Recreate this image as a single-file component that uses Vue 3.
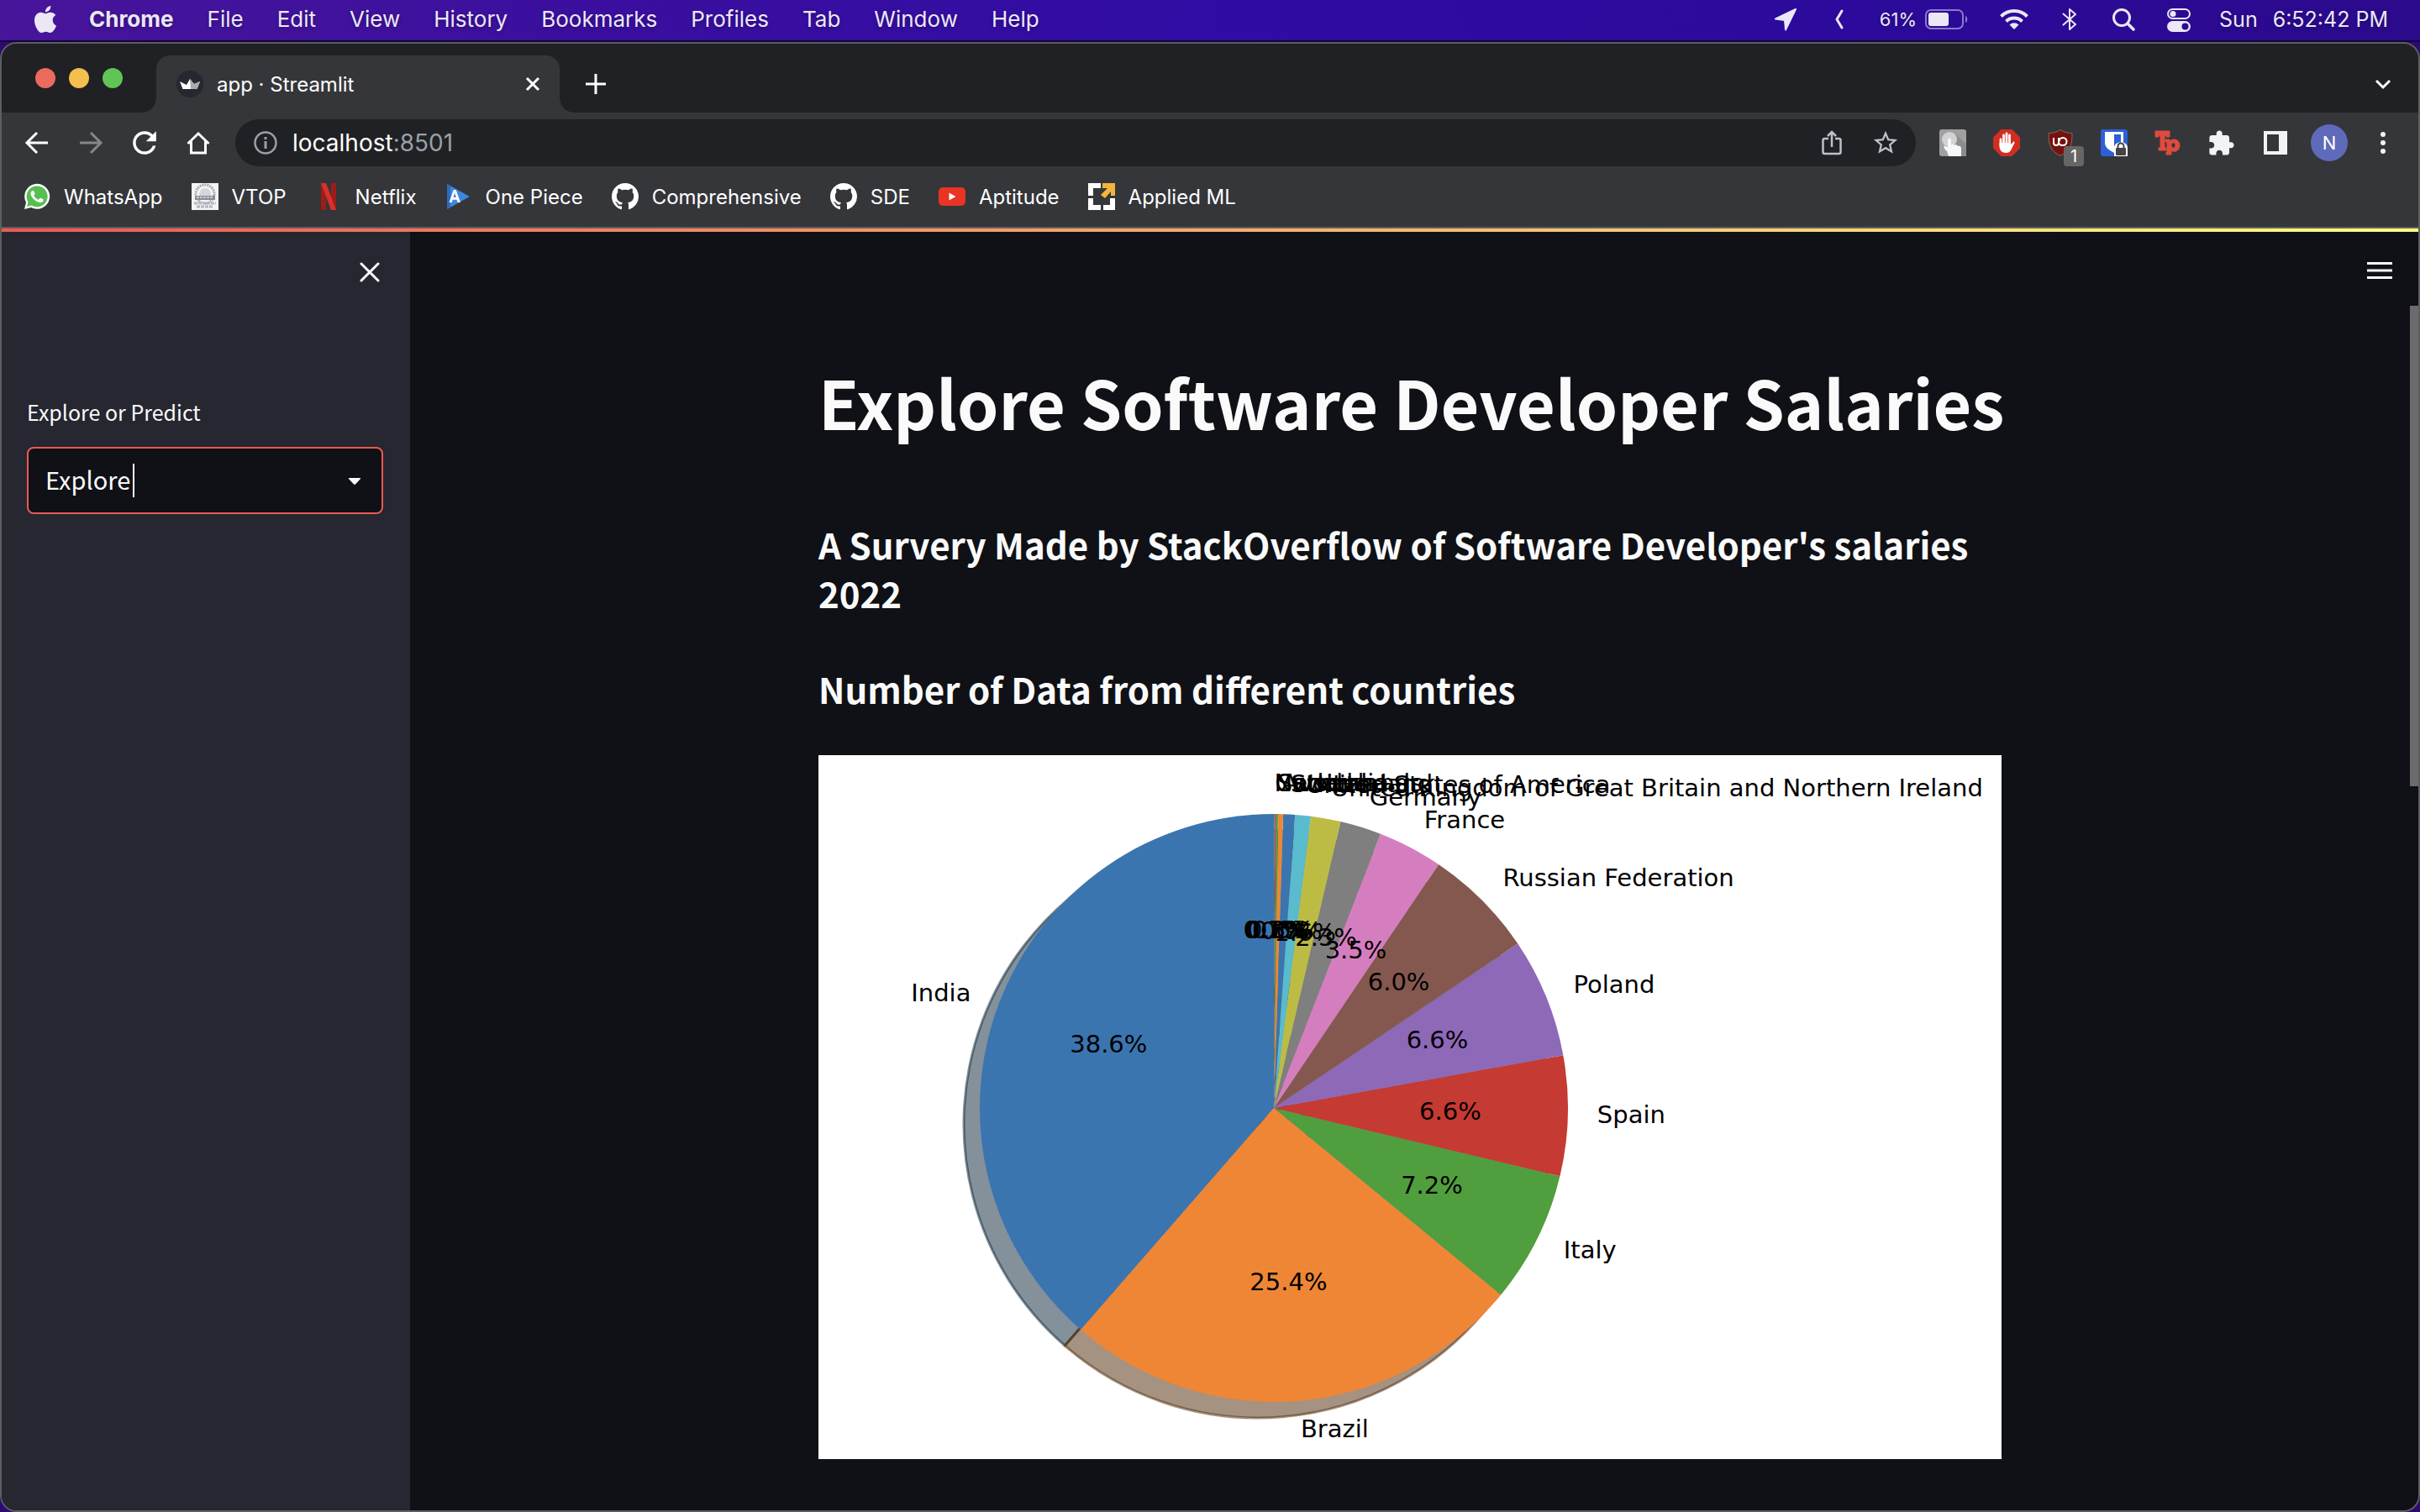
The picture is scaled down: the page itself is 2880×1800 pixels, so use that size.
<script setup>
import { ref } from 'vue'

const mode = ref('Explore')
const menus = ['File', 'Edit', 'View', 'History', 'Bookmarks', 'Profiles', 'Tab', 'Window', 'Help']

const githubMark =
  'M8 0C3.58 0 0 3.58 0 8c0 3.54 2.29 6.53 5.47 7.59.4.07.55-.17.55-.38 0-.19-.01-.82-.01-1.49-2.01.37-2.53-.49-2.69-.94-.09-.23-.48-.94-.82-1.13-.28-.15-.68-.52-.01-.53.63-.01 1.08.58 1.23.82.72 1.21 1.87.87 2.33.66.07-.52.28-.87.51-1.07-1.78-.2-3.64-.89-3.64-3.95 0-.87.31-1.59.82-2.15-.08-.2-.36-1.02.08-2.12 0 0 .67-.21 2.2.82.64-.18 1.32-.27 2-.27.68 0 1.36.09 2 .27 1.53-1.04 2.2-.82 2.2-.82.44 1.1.16 1.92.08 2.12.51.56.82 1.27.82 2.15 0 3.07-1.87 3.75-3.65 3.95.29.25.54.73.54 1.48 0 1.07-.01 1.93-.01 2.2 0 .21.15.46.55.38A8.013 8.013 0 0016 8c0-4.42-3.58-8-8-8z'

// Share of respondents per country, counter-clockwise from twelve o'clock.
const shares = [
  { name: 'India', value: 38.6, color: '#3b75af' },
  { name: 'Brazil', value: 25.44, color: '#ef8636' },
  { name: 'Italy', value: 7.23, color: '#519e3e' },
  { name: 'Spain', value: 6.6, color: '#c53a32' },
  { name: 'Poland', value: 6.57, color: '#8d69b8' },
  { name: 'Russian Federation', value: 6.1, text: '6.0%', color: '#84584e' },
  { name: 'France', value: 3.55, text: '3.5%', color: '#d57ebf' },
  { name: 'Germany', value: 2.27, color: '#7f7f7f' },
  { name: 'United Kingdom of Great Britain and Northern Ireland', value: 1.63, color: '#bcbc45' },
  { name: 'United States of America', value: 0.86, color: '#59bbce' },
  { name: 'Switzerland', value: 0.645, color: '#3b75af' },
  { name: 'Australia', value: 0.28, color: '#ef8636' },
  { name: 'Sweden', value: 0.138, color: '#519e3e' },
  { name: 'Canada', value: 0.045, text: '0.1%', color: '#c53a32' },
  { name: 'Netherlands', value: 0.042, text: '0.1%', color: '#8d69b8' },
]

const shadowColors = ['#092436', '#4c2604', '#0d300d', '#400c0c', '#2c1f39', '#2a1a17', '#441f3a', '#262626', '#38390a', '#07393e']

const cx = 542
const cy = 420
const r = 350

function point(fraction, radius) {
  const a = fraction * 2 * Math.PI
  return { x: cx - radius * Math.sin(a), y: cy - radius * Math.cos(a) }
}

const total = shares.reduce((sum, s) => sum + s.value, 0)
let start = 0
const wedges = shares.map((s, i) => {
  const end = start + s.value / total
  const mid = (start + end) / 2
  const a = point(start, r)
  const b = point(end, r)
  const label = point(mid, r * 1.1)
  const pct = point(mid, r * 0.6)
  start = end
  return {
    ...s,
    d: `M${cx} ${cy}L${a.x} ${a.y}A${r} ${r} 0 0 0 ${b.x} ${b.y}Z`,
    shadow: shadowColors[i % 10],
    label,
    pct,
    anchor: label.x < cx ? 'end' : 'start',
    text: s.text || s.value.toFixed(1) + '%',
  }
})
</script>

<template>
  <div class="desktop">
    <header class="menubar">
      <nav class="menus">
        <svg class="apple" viewBox="0 0 24 24"><path fill="currentColor" d="M12.152 6.896c-.948 0-2.415-1.078-3.96-1.04-2.04.027-3.91 1.183-4.961 3.014-2.117 3.675-.546 9.103 1.519 12.09 1.013 1.454 2.208 3.09 3.792 3.039 1.52-.065 2.09-.987 3.935-.987 1.831 0 2.35.987 3.96.948 1.637-.026 2.676-1.48 3.676-2.948 1.156-1.688 1.636-3.325 1.662-3.415-.039-.013-3.182-1.221-3.22-4.857-.026-3.04 2.48-4.494 2.597-4.559-1.429-2.09-3.623-2.324-4.39-2.376-2-.156-3.675 1.09-4.61 1.09zM15.53 3.83c.843-1.012 1.4-2.427 1.245-3.83-1.207.052-2.662.805-3.532 1.818-.78.896-1.454 2.338-1.273 3.714 1.338.104 2.715-.688 3.559-1.701" /></svg>
        <strong>Chrome</strong>
        <span v-for="m in menus" :key="m">{{ m }}</span>
      </nav>
      <div class="status">
        <svg width="32" height="32" viewBox="0 0 32 32"><path d="M28 4 4 15.5l11 1.5 1 11.500z" fill="currentColor" stroke="currentColor" stroke-width="2" stroke-linejoin="round" /></svg>
        <svg width="32" height="32" viewBox="0 0 32 32"><path d="M19 6 13 16l6 10" fill="none" stroke="currentColor" stroke-width="3" stroke-linecap="round" stroke-linejoin="round" /></svg>
        <span class="power">
          <span>61%</span>
          <svg width="54" height="28" viewBox="0 0 54 28">
            <rect x="1" y="3" width="44" height="22" rx="6" fill="none" stroke="currentColor" stroke-opacity=".5" stroke-width="2" />
            <rect x="4" y="6" width="24" height="16" rx="3" fill="currentColor" />
            <path d="M48 10v8c3-1 3-7 0-8z" fill="currentColor" fill-opacity=".5" />
          </svg>
        </span>
        <svg width="40" height="32" viewBox="0 0 40 32"><g fill="none" stroke="currentColor" stroke-width="4"><path d="M4.500 12.500a22 22 0 0 1 31 0" /><path d="M10.500 18.500a13.500 13.500 0 0 1 19 0" /></g><path d="M14.500 22.500a8 8 0 0 1 11 0L20 28z" fill="currentColor" /></svg>
        <svg width="28" height="32" viewBox="0 0 28 32"><path d="M6.500 9.500 21 22l-7 6V4l7 6L6.500 22.500" fill="none" stroke="currentColor" stroke-width="2" stroke-linejoin="round" stroke-linecap="round" /></svg>
        <svg width="36" height="32" viewBox="0 0 36 32"><circle cx="16" cy="14" r="9.500" fill="none" stroke="currentColor" stroke-width="3" /><path d="m23 21 7 7" stroke="currentColor" stroke-width="3.500" stroke-linecap="round" /></svg>
        <svg width="32" height="32" viewBox="0 0 32 32"><rect x="3" y="4" width="26" height="11" rx="5.500" fill="none" stroke="currentColor" stroke-width="2" /><circle cx="9" cy="9.500" r="3.500" fill="currentColor" /><rect x="2" y="18" width="28" height="13" rx="6.500" fill="currentColor" /><circle cx="23.500" cy="24.500" r="4" fill="#2b0b92" /></svg>
        <time class="clock"><span>Sun</span><span>6:52:42 PM</span></time>
      </div>
    </header>

    <div class="window">
      <div class="tabstrip">
        <div class="lights"><i class="red"></i><i class="yellow"></i><i class="green"></i></div>
        <div class="tab">
          <svg class="favicon" viewBox="0 0 32 32"><circle cx="16" cy="16" r="16" fill="#262730" /><path d="M4 13l8 4 4-7 5 6 7-3-3.500 9h-17z" fill="#fff" /><path d="M16 10l5 6-4 6zM28 13l-7 3-4 6h7.500z" fill="#a9aaae" /></svg>
          <span class="tab-title">app · Streamlit</span>
          <button class="tab-close" aria-label="Close tab"><svg width="20" height="20" viewBox="0 0 20 20"><path d="M3 3l14 14M17 3 3 17" stroke="#fff" stroke-width="3" /></svg></button>
        </div>
        <button class="new-tab" aria-label="New tab"><svg width="24" height="24" viewBox="0 0 24 24"><path d="M12 0v24M0 12h24" stroke="#fff" stroke-width="3" /></svg></button>
        <button class="tab-search" aria-label="Search tabs"><svg width="20" height="20" viewBox="0 0 20 20"><path d="M2 6l8 8 8-8" fill="none" stroke="#fff" stroke-width="3" /></svg></button>
      </div>

      <div class="toolbar">
        <div class="group">
          <button class="icon-btn" aria-label="Back"><svg width="32" height="32" viewBox="0 0 32 32"><path d="M29 16H5M16 4 4 16l12 12" fill="none" stroke="#fff" stroke-width="3" /></svg></button>
          <button class="icon-btn" aria-label="Forward"><svg width="32" height="32" viewBox="0 0 32 32"><path d="M3 16h24M16 4l12 12-12 12" fill="none" stroke="#86878a" stroke-width="3" /></svg></button>
          <button class="icon-btn" aria-label="Reload"><svg width="38" height="38" viewBox="1 1 22 22"><path fill="#fff" d="M17.650 6.350C16.200 4.900 14.210 4 12 4c-4.420 0-7.990 3.580-7.990 8s3.570 8 7.990 8c3.730 0 6.840-2.550 7.730-6h-2.080c-.82 2.330-3.040 4-5.650 4-3.310 0-6-2.690-6-6s2.690-6 6-6c1.660 0 3.140.69 4.220 1.780L13 11h7V4l-2.350 2.350z" /></svg></button>
          <button class="icon-btn" aria-label="Home"><svg width="32" height="32" viewBox="0 0 32 32"><path d="M3.500 17 16 5l12.500 12M7.500 14v14h17V14" fill="none" stroke="#fff" stroke-width="3" /></svg></button>
        </div>
        <div class="omnibox">
          <svg width="28" height="28" viewBox="0 0 28 28"><circle cx="14" cy="14" r="12.500" fill="none" stroke="#9aa0a6" stroke-width="2.500" /><path d="M14 12v9M14 7v3" stroke="#9aa0a6" stroke-width="3" /></svg>
          <span class="url">localhost<em>:8501</em></span>
          <button class="icon-btn" aria-label="Share"><svg width="28" height="32" viewBox="0 0 28 32"><path d="M10 11H5.500a2 2 0 0 0-2 2v14a2 2 0 0 0 2 2h17a2 2 0 0 0 2-2V13a2 2 0 0 0-2-2H18M14 21V4M9 8l5-5 5 5" fill="none" stroke="#bdc1c6" stroke-width="2.500" /></svg></button>
          <button class="icon-btn" aria-label="Bookmark this page"><svg width="34" height="34" viewBox="0 0 24 24"><path fill="#bdc1c6" d="M22 9.240l-7.190-.62L12 2 9.190 8.630 2 9.240l5.460 4.730L5.820 21 12 17.270 18.180 21l-1.630-7.030L22 9.240zM12 15.400l-3.760 2.270 1-4.280-3.320-2.880 4.380-.38L12 6.100l1.710 4.040 4.380.38-3.320 2.880 1 4.280L12 15.400z" /></svg></button>
        </div>
        <div class="group">
          <button class="icon-btn" aria-label="Clicker extension"><svg width="32" height="32" viewBox="0 0 32 32"><rect width="32" height="32" rx="3" fill="#a0a0a0" /><path d="M20 6l12 12v14H16z" fill="#8c8c8c" /><circle cx="12" cy="12" r="9" fill="#d2d2d2" /><path d="M10 13c0-3 4-3 4 0v6c1-2 3-1 4 0 1-1 3-1 4 1 2-1 4 0 4 3v9H11l-2-6c-5-4-4-7-2-6l3 1z" fill="#f4f8fc" /></svg></button>
          <button class="icon-btn" aria-label="Ad blocker"><svg width="32" height="32" viewBox="0 0 32 32"><path d="M9.500 0h13L32 9.500v13L22.500 32h-13L0 22.500v-13z" fill="#d12e21" /><path d="M9 12v7M12.500 7v12M16 5v14M19.500 7v12" stroke="#fff" stroke-width="2.800" stroke-linecap="round" /><path d="M7.600 16h13.300l.5 2 2.200-3c1-1 2.400 0 1.700 1.500L21 25c-1 2-3 3-5.500 3-5 0-8-3-8-8z" fill="#fff" /></svg></button>
          <button class="icon-btn" aria-label="uBlock Origin"><svg width="32" height="32" viewBox="0 0 32 32"><path d="M16 .5c4 3 9 4 14 4 0 14-2 21-14 27C4 25.500 2 18.500 2 4.500c5 0 10-1 14-4z" fill="#74120f" stroke="#8d6663" /><path d="M8 10v6q0 3 3 3t3-3v-6m0 6q1 3 4 3h1a4.500 4.500 0 1 0-4.500-4.500" fill="none" stroke="#fff" stroke-width="2" /></svg><span class="count">1</span></button>
          <button class="icon-btn" aria-label="Bitwarden"><svg width="32" height="32" viewBox="0 0 32 32"><rect width="32" height="32" rx="3" fill="#2c5fd8" /><path d="M5 3h22v13c0 6-6 9-11 12C11 25 5 22 5 16z" fill="#fff" /><path d="M16 6h8v10c0 4-4 6-8 8z" fill="#2c5fd8" /><path d="M16 32V22c0-9 16-9 16 0v10z" fill="#fff" /><rect x="18" y="22" width="12" height="9" rx="1" fill="#444" /><path d="M20.500 22v-2a3.500 3.500 0 0 1 7 0v2" fill="none" stroke="#444" stroke-width="2" /></svg></button>
          <button class="icon-btn" aria-label="Tp extension"><svg width="32" height="32" viewBox="0 0 32 32"><path d="M1 2h17v7h-4V7h-2v15h2v3H5v-3h2V7H5v2H1zM13 12h5v2c4-4 12-2 12 5s-7 9-10 6v5h-6v-3h1V15h-2zm7 7c0 4 5 4 5 0s-5-4-5 0z" fill="#de4b3f" stroke="#de4b3f" fill-rule="evenodd" /></svg></button>
          <button class="icon-btn" aria-label="Extensions"><svg width="32" height="32" viewBox="1 0 23 23"><path fill="#f1f3f4" d="M20.500 11H19V7c0-1.100-.9-2-2-2h-4V3.500C13 2.120 11.880 1 10.500 1S8 2.120 8 3.500V5H4c-1.100 0-1.990.9-1.990 2v3.800H3.500c1.490 0 2.700 1.210 2.700 2.700s-1.210 2.700-2.700 2.700H2V20c0 1.100.9 2 2 2h3.800v-1.500c0-1.490 1.210-2.700 2.700-2.700 1.490 0 2.700 1.210 2.700 2.700V22H17c1.100 0 2-.9 2-2v-4h1.500c1.380 0 2.500-1.120 2.500-2.500S21.880 11 20.500 11z" /></svg></button>
          <button class="icon-btn" aria-label="Side panel"><svg width="28" height="28" viewBox="0 0 28 28"><path d="M0 0h28v28H0zM4 4v20h14V4z" fill="#f1f3f4" fill-rule="evenodd" /></svg></button>
          <button class="icon-btn" aria-label="Profile"><span class="avatar">N</span></button>
          <button class="icon-btn" aria-label="Chrome menu"><svg width="8" height="28" viewBox="0 0 8 28"><g fill="#f1f3f4"><circle cx="4" cy="4" r="3" /><circle cx="4" cy="14" r="3" /><circle cx="4" cy="24" r="3" /></g></svg></button>
        </div>
      </div>

      <nav class="bookmarks">
        <a href="#"><svg viewBox="0 0 32 32"><path d="M1 31l2-8A15 15 0 1 1 9 29z" fill="#fff" /><path d="M4 28l1.500-5.500A12.500 12.500 0 1 1 9.500 26.500z" fill="#57bf50" /><path transform="translate(1 1) scale(1.250)" fill="#fff" d="M17.472 14.382c-.297-.149-1.758-.867-2.030-.967-.273-.099-.471-.148-.67.15-.197.297-.767.966-.94 1.164-.173.199-.347.223-.644.075-.297-.15-1.255-.463-2.390-1.475-.883-.788-1.480-1.761-1.653-2.059-.173-.297-.018-.458.13-.606.134-.133.298-.347.446-.52.149-.174.198-.298.298-.497.099-.198.05-.371-.025-.52-.075-.149-.669-1.612-.916-2.207-.242-.579-.487-.5-.669-.51-.173-.008-.371-.01-.57-.01-.198 0-.52.074-.792.372-.272.297-1.040 1.016-1.040 2.479 0 1.462 1.065 2.875 1.213 3.074.149.198 2.096 3.200 5.077 4.487.709.306 1.262.489 1.694.625.712.227 1.360.195 1.871.118.571-.085 1.758-.719 2.006-1.413.248-.694.248-1.289.173-1.413-.074-.124-.272-.198-.57-.347z" /></svg>WhatsApp</a>
        <a href="#"><svg viewBox="0 0 32 32"><rect width="32" height="32" fill="#f4f4f6" /><circle cx="16" cy="13" r="11" fill="none" stroke="#a9abb4" stroke-width="3" stroke-dasharray="2 1" /><circle cx="16" cy="13" r="7" fill="#d5d6db" /><path d="M4 15h24v5H4z" fill="#888b97" /><path d="M6 17h20" stroke="#dcdde2" stroke-width="1.500" stroke-dasharray="3 1" /><path d="M3 24h26M6 28h20" stroke="#b4b6be" stroke-width="3" stroke-dasharray="4 1" /></svg>VTOP</a>
        <a href="#"><svg viewBox="0 0 32 32"><path d="M7 0h6v32H7zM19 0h6v32h-6z" fill="#9c1c19" /><path d="M7 0h6l12 32h-6z" fill="#d8302a" /></svg>Netflix</a>
        <a href="#"><svg viewBox="0 0 32 32"><path d="M2 1l27 15L2 31z" fill="#3f86df" /><path d="M2 1l4 2v26l-4 2z" fill="#2f69b8" /><path d="M4.500 23 9.700 8h3L18 23h-3.400l-1-3.200H8.700l-1 3.200zm5-6h3.300l-1.600-5.200z" fill="#fff" fill-rule="evenodd" /></svg>One Piece</a>
        <a href="#"><svg viewBox="0 0 16 16"><path fill="#fff" :d="githubMark" /></svg>Comprehensive</a>
        <a href="#"><svg viewBox="0 0 16 16"><path fill="#fff" :d="githubMark" /></svg>SDE</a>
        <a href="#"><svg viewBox="0 0 32 32"><rect y="5" width="32" height="22" rx="5" fill="#e93323" /><path d="M12.500 11.500v9l8-4.500z" fill="#fff" /></svg>Aptitude</a>
        <a href="#"><svg viewBox="0 0 32 32"><path d="M0 0h15v6H6v9H0zM0 18h6v8h9v6H0zM18 26h8v-8h6v14H18z" fill="#fff" /><path d="M17 0h15v15h-5v-5l-7 8-5-4 8-8h-6z" fill="#f3b33d" /></svg>Applied ML</a>
      </nav>

      <div class="page">
        <div class="decoration"></div>
        <aside class="sidebar">
          <button class="close" aria-label="Close sidebar"><svg width="24" height="24" viewBox="0 0 24 24"><path d="M2 2l20 20M22 2 2 22" stroke="#fff" stroke-width="3" stroke-linecap="round" /></svg></button>
          <div class="field">
            <label for="mode">Explore or Predict</label>
            <div class="select">
              <select id="mode" v-model="mode">
                <option>Explore</option>
                <option>Predict</option>
              </select>
              <i class="caret"></i>
              <svg class="arrow" width="14" height="8" viewBox="0 0 14 8"><path d="M0 0h14v1L8 7.500q-1 .8-2 0L0 1z" fill="#fafafa" /></svg>
            </div>
          </div>
        </aside>
        <main class="main">
          <button class="menu" aria-label="Main menu"><svg width="30" height="20" viewBox="0 0 30 20"><path d="M0 1.500h30M0 10h30M0 18.500h30" stroke="#fafafa" stroke-width="3" /></svg></button>
          <article class="content">
            <h1>Explore Software Developer Salaries</h1>
            <h3>A Survery Made by StackOverflow of Software Developer's salaries 2022</h3>
            <h3>Number of Data from different countries</h3>
            <svg class="chart" viewBox="0 0 1408 838" role="img" aria-label="Pie chart of responses by country">
              <rect width="1408" height="838" fill="#fff" />
              <g transform="translate(-19 19)">
                <path v-for="w in wedges" :key="w.name" :d="w.d" :fill="w.shadow" :stroke="w.shadow" fill-opacity=".5" stroke-opacity=".5" stroke-width="3" />
              </g>
              <path v-for="w in wedges" :key="w.name" :d="w.d" :fill="w.color" />
              <g v-for="w in wedges" :key="w.name">
                <text :x="w.label.x" :y="w.label.y" dy="8" :text-anchor="w.anchor">{{ w.name }}</text>
                <text :x="w.pct.x" :y="w.pct.y" dy="8" text-anchor="middle">{{ w.text }}</text>
              </g>
            </svg>
          </article>
          <div class="scrollbar"><i></i></div>
        </main>
      </div>
    </div>
  </div>
</template>

<style>
body {
  background: #2d0b6e;
}
</style>

<style scoped>
* {
  box-sizing: border-box;
}
.desktop {
  display: flex;
  flex-direction: column;
  height: 100vh;
  overflow: hidden;
  font-family: Inter, 'Liberation Sans', sans-serif;
  color: #fff;
}
svg {
  display: block;
  flex: none;
}
button {
  padding: 0;
  border: 0;
  background: none;
  font: inherit;
  color: inherit;
}
.menubar {
  display: flex;
  flex: none;
  justify-content: space-between;
  align-items: center;
  height: 50px;
  padding: 0 38px 2px;
  border-bottom: 2px solid #120436;
  background: linear-gradient(90deg, #47159a, #3a0f9f 25%, #300ca4 50%, #2c0a9c 75%, #2b0a8c);
  color: #ebe7f5;
  font-size: 25px;
  line-height: 46px;
  text-shadow: 0 2px 4px rgba(0, 0, 0, 0.3);
}
.menus {
  display: flex;
  align-items: center;
  gap: 40px;
  font-size: 26px;
}
.apple {
  width: 32px;
  height: 32px;
  margin-right: -4px;
}
.status {
  display: flex;
  align-items: center;
  gap: 32px;
}
.power {
  display: flex;
  align-items: center;
  gap: 10px;
  font-size: 22px;
}
.clock {
  display: flex;
  gap: 18px;
}
.window {
  display: flex;
  flex: 1;
  flex-direction: column;
  min-height: 0;
  overflow: hidden;
  border: 2px solid #5d5e61;
  border-radius: 20px;
  background: #35363a;
}
.tabstrip {
  display: flex;
  flex: none;
  align-items: flex-end;
  height: 82px;
  padding: 0 10px 0 40px;
  background: #202124;
}
.lights {
  display: flex;
  align-items: center;
  gap: 16px;
  height: 82px;
  margin-right: 40px;
}
.lights i {
  width: 24px;
  height: 24px;
  border-radius: 50%;
}
.red {
  background: #ec6a5e;
}
.yellow {
  background: #f4bf4f;
}
.green {
  background: #61c554;
}
.tab {
  position: relative;
  display: flex;
  align-items: center;
  width: 480px;
  height: 68px;
  padding: 0 20px 0 24px;
  border-radius: 16px 16px 0 0;
  background: #35363a;
}
.tab::before,
.tab::after {
  content: '';
  position: absolute;
  bottom: 0;
  width: 16px;
  height: 16px;
}
.tab::before {
  left: -16px;
  background: radial-gradient(circle at 0 0, transparent 15px, #35363a 16px);
}
.tab::after {
  right: -16px;
  background: radial-gradient(circle at 100% 0, transparent 15px, #35363a 16px);
}
.favicon {
  width: 32px;
  height: 32px;
}
.tab-title {
  flex: 1;
  padding-left: 16px;
  font-size: 24px;
}
.tab-close {
  display: grid;
  place-items: center;
  width: 24px;
  height: 32px;
}
.new-tab {
  display: grid;
  place-items: center;
  width: 86px;
  height: 68px;
}
.tab-search {
  display: grid;
  place-items: center;
  width: 64px;
  height: 68px;
  margin-left: auto;
}
.toolbar {
  display: flex;
  flex: none;
  align-items: center;
  gap: 12px;
  height: 72px;
  padding: 0 10px;
}
.group {
  display: flex;
}
.icon-btn {
  position: relative;
  display: grid;
  place-items: center;
  width: 64px;
  height: 56px;
}
.omnibox {
  display: flex;
  flex: 1;
  align-items: center;
  height: 56px;
  padding: 0 4px 0 22px;
  border-radius: 28px;
  background: #202124;
}
.url {
  flex: 1;
  padding-left: 18px;
  font-size: 28px;
}
.url em {
  color: #9aa0a6;
  font-style: normal;
}
.count {
  position: absolute;
  right: 4px;
  bottom: 0;
  width: 24px;
  height: 24px;
  border-radius: 4px;
  background: #666;
  font-size: 20px;
  line-height: 24px;
  text-align: center;
}
.avatar {
  width: 44px;
  height: 44px;
  border-radius: 50%;
  background: #5f6abb;
  font-size: 22px;
  line-height: 44px;
  text-align: center;
}
.bookmarks {
  display: flex;
  flex: none;
  align-items: center;
  gap: 34px;
  height: 66px;
  padding: 0 26px 8px;
  border-bottom: 2px solid #5d5e61;
}
.bookmarks a {
  display: flex;
  align-items: center;
  gap: 16px;
  color: #fff;
  font-size: 24px;
  text-decoration: none;
}
.bookmarks svg {
  width: 32px;
  height: 32px;
}
.page {
  position: relative;
  display: flex;
  flex: 1;
  min-height: 0;
  background: #0f1116;
  font-family: 'Noto Sans CJK JP', 'Noto Sans', sans-serif;
  color: #fafafa;
}
.decoration {
  position: absolute;
  inset: 0 0 auto;
  z-index: 1;
  height: 4px;
  background: linear-gradient(90deg, #ec5953, #fffd80);
}
.sidebar {
  display: flex;
  flex: none;
  flex-direction: column;
  width: 486px;
  padding: 36px 32px 36px 30px;
  background: #262730;
}
.close {
  display: grid;
  place-items: center;
  align-self: flex-end;
  width: 32px;
  height: 32px;
}
.field {
  display: flex;
  flex-direction: column;
  gap: 20px;
  margin-top: 128px;
}
label {
  font-size: 25px;
  line-height: 44px;
}
.select {
  position: relative;
}
select {
  display: block;
  width: 100%;
  height: 80px;
  padding: 0 20px 4px;
  appearance: none;
  border: 2px solid #ec5953;
  border-radius: 8px;
  outline: 0;
  background: #0f1116;
  color: #fafafa;
  font-family: inherit;
  font-size: 29px;
}
.caret {
  position: absolute;
  top: 20px;
  left: 126px;
  width: 2px;
  height: 40px;
  background: #fff;
}
.arrow {
  position: absolute;
  top: 37px;
  right: 27px;
}
.main {
  position: relative;
  flex: 1;
  overflow: hidden;
  padding-right: 10px;
}
.menu {
  position: absolute;
  top: 40px;
  right: 31px;
}
.content {
  max-width: 1408px;
  margin: 0 auto;
  padding-top: 153px;
}
h1,
h3 {
  margin: 0;
}
h1 {
  font-size: 79px;
  font-weight: 700;
  line-height: 106px;
  white-space: nowrap;
}
h3 {
  margin-top: 56px;
  font-size: 42px;
  font-weight: 600;
  line-height: 58px;
}
h1 + h3 {
  margin-top: 88px;
}
.chart {
  width: 100%;
  height: auto;
  margin-top: 50px;
  font-family: 'DejaVu Sans', sans-serif;
  font-size: 29px;
}
.scrollbar {
  position: absolute;
  top: 92px;
  right: 0;
  bottom: 0;
  width: 10px;
}
.scrollbar i {
  display: block;
  width: 100%;
  height: 572px;
  background: #6b6b6e;
}
</style>
